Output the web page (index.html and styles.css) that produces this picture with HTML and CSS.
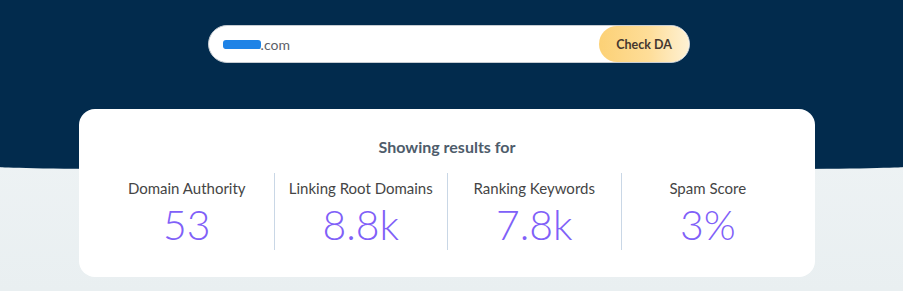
FILE: index.html
```html
<!DOCTYPE html>
<html lang="en">
<head>
    <meta charset="UTF-8">
    <meta name="viewport" content="width=device-width, initial-scale=1.0">
    <title>Domain Authority Checker</title>
    <link rel="stylesheet" href="styles.css">
</head>
<body>
    <div class="hero">
        <form class="da-search">
            <div class="da-input"><span class="redacted">website</span>.com</div>
            <button type="button" class="da-btn">Check DA</button>
        </form>
    </div>

    <div class="results-card">
        <h2 class="results-title">Showing results for</h2>
        <div class="metrics">
            <div class="metric">
                <div class="metric-label">Domain Authority</div>
                <div class="metric-value">53</div>
            </div>
            <div class="metric">
                <div class="metric-label">Linking Root Domains</div>
                <div class="metric-value">8.8k</div>
            </div>
            <div class="metric">
                <div class="metric-label">Ranking Keywords</div>
                <div class="metric-value">7.8k</div>
            </div>
            <div class="metric">
                <div class="metric-label">Spam Score</div>
                <div class="metric-value">3%</div>
            </div>
        </div>
    </div>
</body>
</html>
```

FILE: styles.css
```css
:root {
    --navy: #022b4d;
    --page-bg: #edf2f4;
    --slate: #4e5c6b;
    --label: #454545;
    --purple: #8060f8;
    --divider: #c9d7e6;
}

* {
    margin: 0;
    padding: 0;
    box-sizing: border-box;
    font-family: Lato, 'Liberation Sans', sans-serif;
}

body {
    background: linear-gradient(180deg, #f2f6f7 0%, #e9eff1 100%);
    background-color: var(--page-bg);
    min-height: 100vh;
}

.hero {
    height: 170px;
    background-color: var(--navy);
    padding-top: 25px;
    border-bottom-left-radius: 50% 3px;
    border-bottom-right-radius: 50% 3px;
}

.da-search {
    width: 482px;
    height: 38px;
    margin-left: 208px;
    display: flex;
    background-color: white;
    border: 1px solid #c6ccd2;
    border-radius: 19px;
    overflow: hidden;
}

.da-input {
    flex: 1;
    display: flex;
    align-items: center;
    padding-left: 14px;
    font-size: 14px;
    color: #5b6068;
}

.redacted {
    background-color: #1f83e6;
    color: #1f83e6;
    border-radius: 3px;
    font-size: 12px;
    line-height: 9px;
    letter-spacing: -0.5px;
}

.da-btn {
    width: 90px;
    border: none;
    border-radius: 19px;
    background: linear-gradient(90deg, #fcd176 0%, #fedd98 55%, #fef1d4 100%);
    color: #45372f;
    font-size: 12.5px;
    font-weight: 700;
    cursor: pointer;
}

.results-card {
    width: 736px;
    margin: -61px 0 0 79px;
    background-color: white;
    border-radius: 16px;
    padding: 28px 21px 27px;
    text-align: center;
}

.results-title {
    color: var(--slate);
    font-size: 16px;
    font-weight: 700;
    line-height: 20px;
    margin-bottom: 16px;
}

.metrics {
    display: grid;
    grid-template-columns: repeat(4, 1fr);
}

.metric {
    height: 77px;
    padding-top: 5px;
    border-left: 1px solid var(--divider);
}

.metric:first-child {
    border-left: none;
}

.metric-label {
    color: var(--label);
    font-size: 15px;
    line-height: 20px;
}

.metric-value {
    padding-top: 3px;
    color: var(--purple);
    font-size: 41px;
    font-weight: 300;
    line-height: 48px;
}
```
